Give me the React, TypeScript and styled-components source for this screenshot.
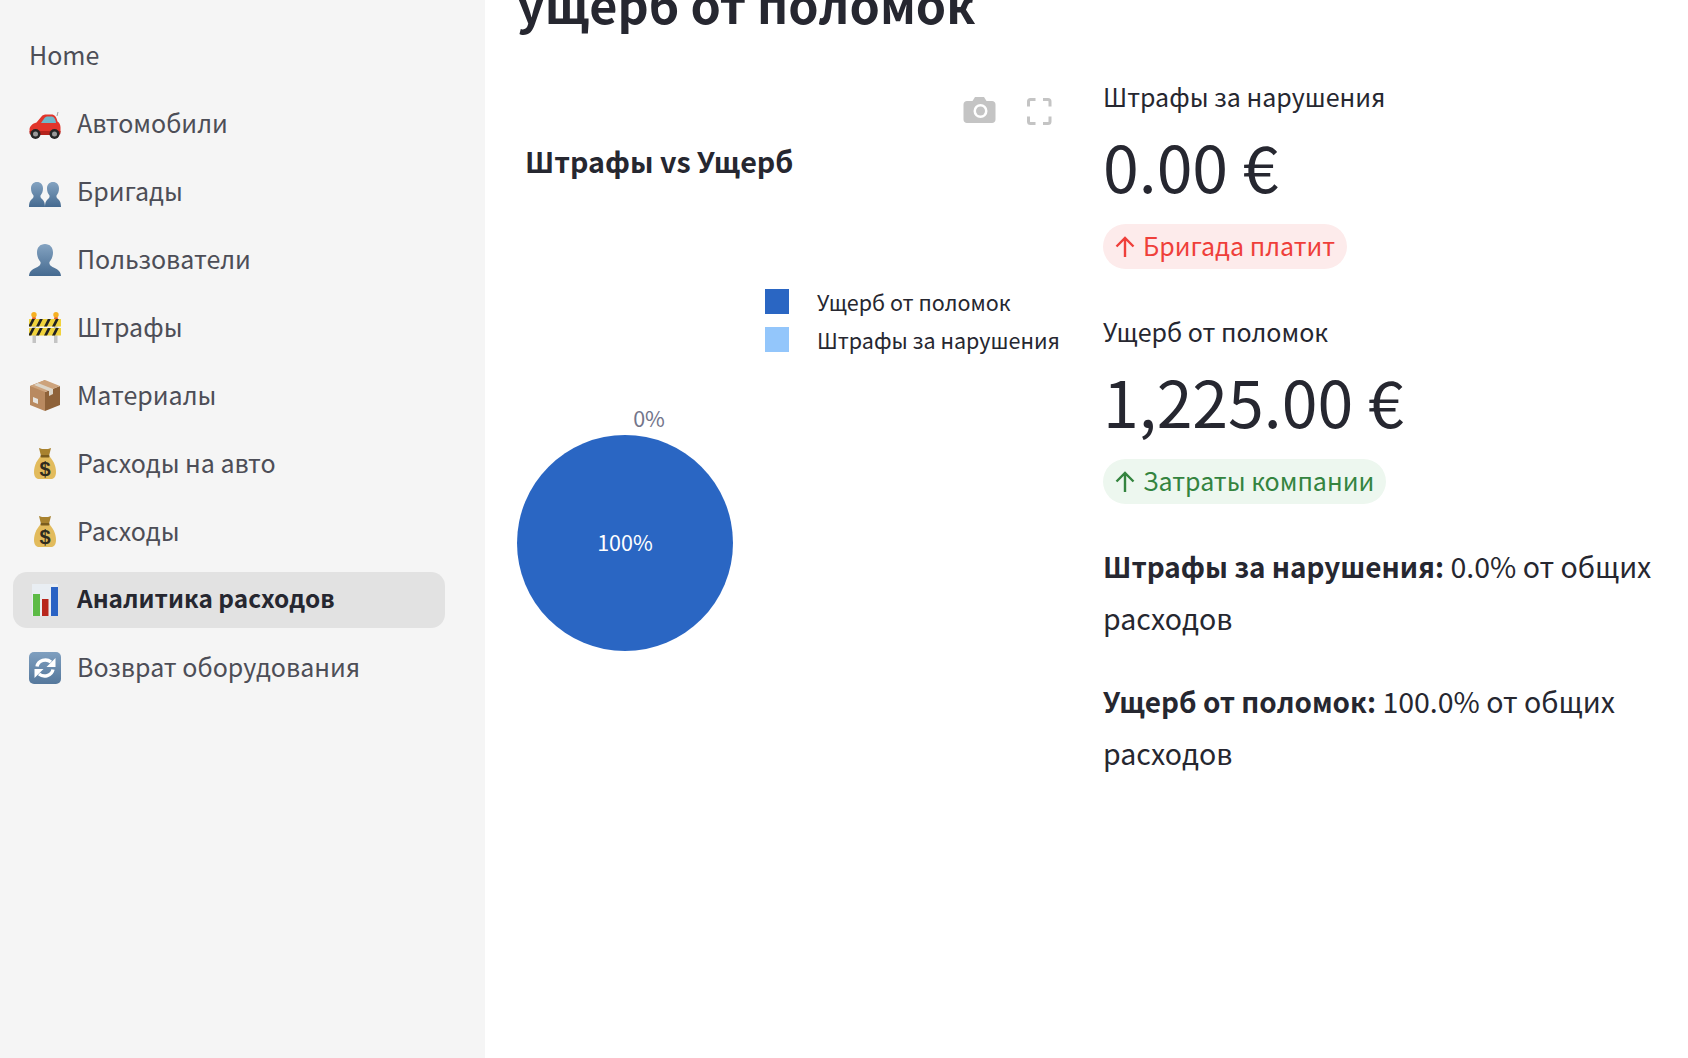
import React from "react";
import styled, { createGlobalStyle } from "styled-components";

const Global = createGlobalStyle`
  html, body { margin: 0; padding: 0; height: 100%; background: #fff; overflow: hidden; }
  body { font-family: "Noto Sans CJK SC", "Noto Sans", sans-serif; color: #262730; }
`;
const Page = styled.div`display: flex; height: 1058px; overflow: hidden;`;
const Sidebar = styled.aside`width: 485px; flex: none; background: #f5f5f5; padding: 28px 40px 0 13px; box-sizing: border-box; display: flex; flex-direction: column; gap: 12px;`;
const NavRow = styled.div<{ $active?: boolean }>`
  height: 56px; display: flex; align-items: center; gap: 16px; padding: 0 16px; border-radius: 14px;
  background: ${(p) => (p.$active ? "#e2e2e2" : "transparent")};
  color: ${(p) => (p.$active ? "#262730" : "#4d4e57")};
  font-size: ${(p) => (p.$active ? "24.4px" : "25px")}; font-weight: ${(p) => (p.$active ? 700 : 400)}; line-height: 52px;
`;
const NavLabel = styled.span`display: block; margin-bottom: 4px;`;
const NavIcon = styled.svg`width: 32px; height: 32px; flex: none;`;
const Main = styled.main`flex: 1; min-width: 0; padding: 0 0 0 32px; display: flex; flex-direction: column;`;
const Title = styled.h1`margin: -36px 0 0; font-size: 48.500px; line-height: 78px; font-weight: 700; color: #262730; white-space: nowrap;`;
const Columns = styled.div`display: grid; grid-template-columns: 586px 1fr;`;
const ChartSvg = styled.svg`display: block; width: 586px; height: 640px; font-family: "Noto Sans CJK SC", "Noto Sans", sans-serif;`;
const Stats = styled.section`padding: 34px 0 0; display: flex; flex-direction: column; align-items: flex-start;`;
const Metric = styled.div`
  display: flex; flex-direction: column; align-items: flex-start; margin-bottom: 36px;
  & + & { margin-top: 6px; }
`;
const MetricLabel = styled.div`font-size: 25px; line-height: 40px; color: #262730;`;
const MetricValue = styled.div`font-size: 64.400px; line-height: 98px; color: #262730; white-space: nowrap;`;
const Pill = styled.div<{ $tone: "red" | "green" }>`
  height: 45px; margin-top: 10px; padding: 0 12px; border-radius: 23px; display: flex; align-items: center; gap: 7px;
  font-size: 25px; line-height: 41px;
  background: ${(p) => (p.$tone === "red" ? "#fdebeb" : "#edf7ef")};
  color: ${(p) => (p.$tone === "red" ? "#ef3f3a" : "#34843f")};
`;
const PillText = styled.span`display: block; margin-bottom: 3px;`;
const Arrow = styled.svg`width: 22px; height: 24px; flex: none; margin-left: -1px;`;
const Paragraph = styled.p`margin: 0 0 32px; font-size: 28.500px; line-height: 51px; width: 560px; color: #262730;`;
const Strong = styled.b`font-size: 27.900px; font-weight: 700;`;

const Car = () => (
  <NavIcon viewBox="0 0 32 32">
    <path d="M.5 22c0-4 3-6.500 7-7.500l5-6c1-1.500 3-2 5-2h5c3 0 5 2.500 6 7 2 1 3 3.500 3 6v4c0 1-1 1.500-2 1.500H3c-2 0-2.500-1-2.500-3.500z" fill="#e2352b" />
    <path d="M12 15l3.500-5c.8-1 2-1.500 3-1.500h4c2 0 4 2 4.500 6.500z" fill="#6fb7c9" />
    <path d="M.5 23h31v2c0 1-1 2-2 2H3c-1.500 0-2.500-1-2.500-2z" fill="#b5231c" />
    <circle cx="6.500" cy="26" r="5" fill="#262626" /><circle cx="6.500" cy="26" r="2.500" fill="#9a9a9a" />
    <circle cx="25.500" cy="26" r="5" fill="#262626" /><circle cx="25.500" cy="26" r="2.500" fill="#9a9a9a" />
    <path d="M28 8l1-4" stroke="#888" strokeWidth=".8" />
  </NavIcon>
);
const BustDefs = () => (
  <defs>
    <linearGradient id="bust" x1="0" x2="0" y1="0" y2="1">
      <stop offset="0" stopColor="#84a3c1" />
      <stop offset="1" stopColor="#456a90" />
    </linearGradient>
  </defs>
);
const Group = () => (
  <NavIcon viewBox="0 0 32 32">
    <defs>
      <linearGradient id="bust2" x1="0" x2="0" y1="0" y2="1">
        <stop offset="0" stopColor="#84a3c1" />
        <stop offset="1" stopColor="#456a90" />
      </linearGradient>
    </defs>
    <path transform="translate(0 6)" d="M8 0C4.400 0 2 2.600 2 6.500c0 3 1 5 2.500 7 .3 1.500-.3 2.500-1.500 3.500C2 18 .2 19 0 25h16c-.2-6-2-7-3-8-1.200-1-1.800-2-1.500-3.500 1.500-2 2.500-4 2.500-7C14 2.600 11.600 0 8 0z" fill="url(#bust2)" />
    <path transform="translate(16 6)" d="M8 0C4.400 0 2 2.600 2 6.500c0 3 1 5 2.500 7 .3 1.500-.3 2.500-1.500 3.500C2 18 .2 19 0 25h16c-.2-6-2-7-3-8-1.200-1-1.800-2-1.500-3.500 1.500-2 2.500-4 2.500-7C14 2.600 11.600 0 8 0z" fill="url(#bust2)" />
  </NavIcon>
);
const Person = () => (
  <NavIcon viewBox="0 0 32 32">
    <BustDefs />
    <path d="M16 0c-5 0-8 3.500-8 8.500 0 4 1.500 7 3.500 9.500.5 2-.5 3.500-3 5C4 25 .5 26.500 0 32h32c-.5-5.500-4-7-8.500-9-2.500-1.500-3.500-3-3-5 2-2.500 3.500-5.500 3.500-9.500C24 3.500 21 0 16 0z" fill="url(#bust)" />
  </NavIcon>
);
const Barrier = () => (
  <NavIcon viewBox="0 0 32 32">
    <rect x="3.500" y="6" width="3.500" height="25" fill="#c4c4c4" /><rect x="25" y="6" width="3.500" height="25" fill="#c4c4c4" />
    <path d="M3 7l1-4h2l1 4zM25 7l1-4h2l1 4z" fill="#e8622c" />
    <circle cx="5" cy="2.800" r="2.700" fill="#f6b021" /><circle cx="27" cy="2.800" r="2.700" fill="#f6b021" />
    <rect y="7" width="32" height="7.500" fill="#f0d23c" /><rect y="16" width="32" height="7.500" fill="#f0d23c" />
    <path d="M0 13l3-6h3l-3.800 7.500H0zM7 14.500L10.800 7h3L10 14.500zM15 14.500L18.800 7h3L18 14.500zM23 14.500L26.800 7h3L26 14.500zM0 22l3-6h3l-3.800 7.500H0zM7 23.500L10.800 16h3L10 23.500zM15 23.500L18.800 16h3L18 23.500zM23 23.500L26.800 16h3L26 23.500z" fill="#222" />
  </NavIcon>
);
const Box = () => (
  <NavIcon viewBox="0 0 32 32">
    <path d="M16 0L1 6v19l15 6z" fill="#b98a60" /><path d="M16 31l15-6V6L16 12z" fill="#8e6239" />
    <path d="M16 0L1 6l15 6 15-6z" fill="#cda37c" />
    <path d="M9 3l15 6v5l-4 2V11L5 5z" fill="#dcd5c8" />
    <path d="M4 17l5 2v5l-5-2z" fill="#e7e4de" />
  </NavIcon>
);
const Bag = () => (
  <NavIcon viewBox="0 0 32 32">
    <path d="M10 0c2 1 4 1 6 1s4 0 6-1l-2 8h-8z" fill="#a8822f" />
    <path d="M12 8c-3 3-7 8.500-7 16 0 4.500 2 7 5 7h12c3 0 5-2.500 5-7 0-7.500-4-13-7-16z" fill="#e2bb5c" />
    <rect x="11.500" y="7" width="9" height="2.500" rx="1" fill="#7a5c1e" />
    <text x="16" y="27.500" textAnchor="middle" fontSize="20" fontWeight="700" fontFamily="Liberation Sans, sans-serif" fill="#2f2c20">$</text>
  </NavIcon>
);
const Bars = () => (
  <NavIcon viewBox="0 0 32 32">
    <rect x="3" width="26" height="32" fill="#e9eef3" />
    <rect x="4" y="10" width="7" height="22" fill="#5dbb46" />
    <rect x="13" y="15" width="6.500" height="17" fill="#b8261d" />
    <rect x="22" y="3" width="7" height="29" fill="#2962c4" />
  </NavIcon>
);
const Cycle = () => (
  <NavIcon viewBox="0 0 32 32">
    <defs>
      <linearGradient id="cyc" x1="0" x2="0" y1="0" y2="1">
        <stop offset="0" stopColor="#7f9fbf" />
        <stop offset="1" stopColor="#55789c" />
      </linearGradient>
    </defs>
    <rect width="32" height="32" rx="5" fill="url(#cyc)" />
    <path d="M8 14.500A8.500 8 0 0 1 22 10" fill="none" stroke="#fff" strokeWidth="3.400" />
    <path d="M26.500 6v9h-9z" fill="#fff" />
    <path d="M24 17.500A8.500 8 0 0 1 10 22" fill="none" stroke="#fff" strokeWidth="3.400" />
    <path d="M5.500 26v-9h9z" fill="#fff" />
  </NavIcon>
);

const nav: [React.ReactNode, string, boolean?][] = [
  [<Car />, "Автомобили"],
  [<Group />, "Бригады"],
  [<Person />, "Пользователи"],
  [<Barrier />, "Штрафы"],
  [<Box />, "Материалы"],
  [<Bag />, "Расходы на авто"],
  [<Bag />, "Расходы"],
  [<Bars />, "Аналитика расходов", true],
  [<Cycle />, "Возврат оборудования"],
];

const UpArrow = () => (
  <Arrow viewBox="0 0 22 24" fill="none" stroke="currentColor" strokeWidth="2.400">
    <path d="M11 22V3M2.500 11.500L11 3l8.500 8.500" />
  </Arrow>
);

const Chart = () => (
  <ChartSvg viewBox="0 0 586 640">
    <g transform="translate(40 0)">
      <path d="M410 59h5.500l2.500-4h9l2.500 4h5.500c2 0 3.500 1.500 3.500 3.500v15c0 2-1.500 3.500-3.500 3.500h-25c-2 0-3.500-1.500-3.500-3.500v-15c0-2 1.500-3.500 3.500-3.500z" fill="#c4c4c4" />
      <circle cx="423.500" cy="69" r="7" fill="#fff" />
      <circle cx="423.500" cy="69" r="4.500" fill="#c4c4c4" />
    </g>
    <path transform="translate(44 0)" d="M467.500 64.500v-5a2 2 0 0 1 2-2h5M482 57.500h5a2 2 0 0 1 2 2v5M489 74.500v5a2 2 0 0 1-2 2h-5M474.500 81.500h-5a2 2 0 0 1-2-2v-5" fill="none" stroke="#c4c4c4" strokeWidth="3" />
    <text x="8" y="131" fontSize="28.700" fontWeight="700" fill="#262730">Штрафы vs Ущерб</text>
    <rect x="248" y="247" width="24" height="25" fill="#2a66c3" />
    <rect x="248" y="285" width="24" height="25" fill="#93c6fb" />
    <text x="300" y="269" fontSize="21.500" fill="#262730">Ущерб от поломок</text>
    <text x="300" y="307" fontSize="21.500" fill="#262730">Штрафы за нарушения</text>
    <circle cx="108" cy="501" r="108" fill="#2a66c3" />
    <text x="132" y="385" textAnchor="middle" fontSize="21.500" fill="#73758a">0%</text>
    <text x="108" y="509" textAnchor="middle" fontSize="21.500" fill="#fff">100%</text>
  </ChartSvg>
);

export default function App() {
  return (
    <>
      <Global />
      <Page>
        <Sidebar>
          <NavRow><NavLabel>Home</NavLabel></NavRow>
          {nav.map(([icon, label, active]) => (
            <NavRow key={label} $active={active}>
              {icon}
              <NavLabel>{label}</NavLabel>
            </NavRow>
          ))}
        </Sidebar>
        <Main>
          <Title>ущерб от поломок</Title>
          <Columns>
            <Chart />
            <Stats>
              <Metric>
                <MetricLabel>Штрафы за нарушения</MetricLabel>
                <MetricValue>0.00 €</MetricValue>
                <Pill $tone="red"><UpArrow /><PillText>Бригада платит</PillText></Pill>
              </Metric>
              <Metric>
                <MetricLabel>Ущерб от поломок</MetricLabel>
                <MetricValue>1,225.00 €</MetricValue>
                <Pill $tone="green"><UpArrow /><PillText>Затраты компании</PillText></Pill>
              </Metric>
              <Paragraph><Strong>Штрафы за нарушения:</Strong> 0.0% от общих расходов</Paragraph>
              <Paragraph><Strong>Ущерб от поломок:</Strong> 100.0% от общих расходов</Paragraph>
            </Stats>
          </Columns>
        </Main>
      </Page>
    </>
  );
}
